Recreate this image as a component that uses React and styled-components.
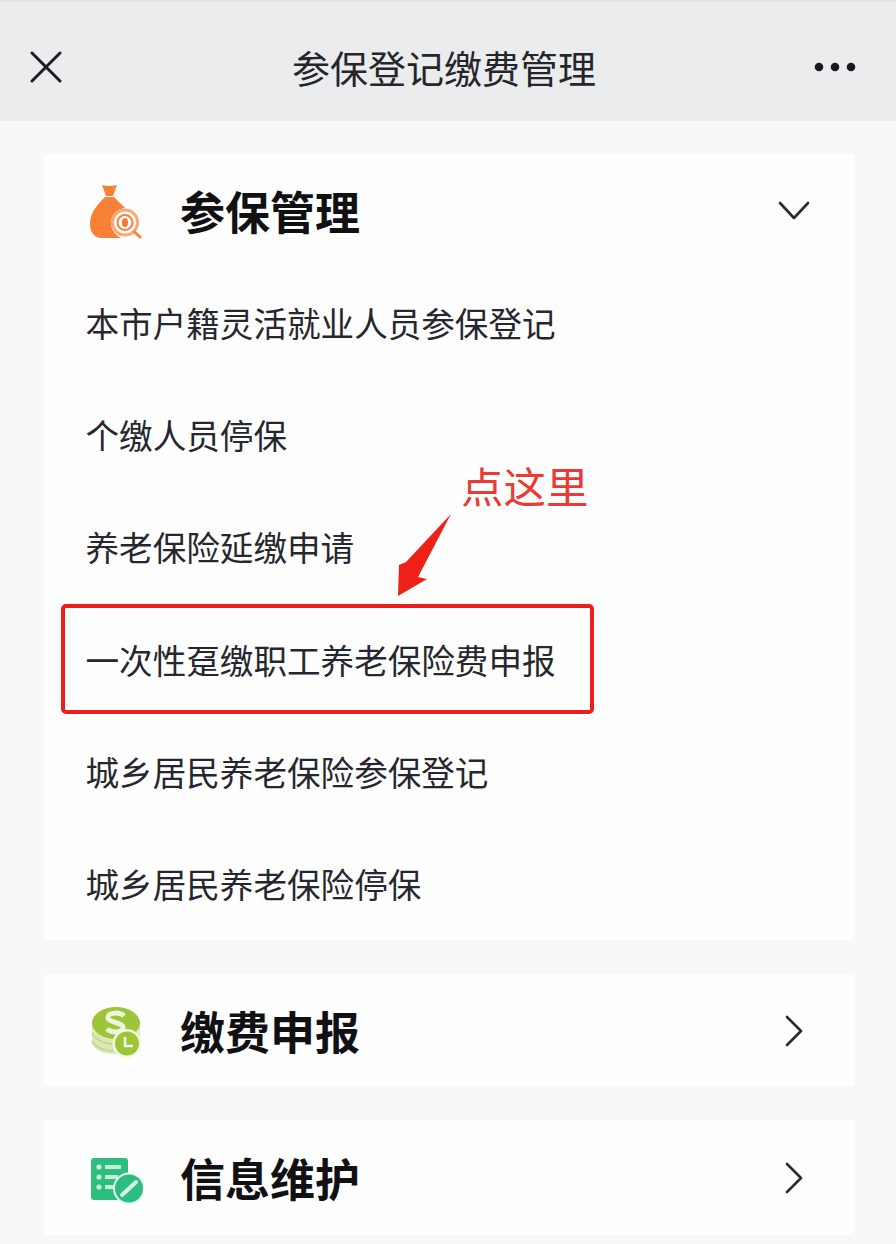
import React from "react";
import styled, { createGlobalStyle } from "styled-components";

const Global = createGlobalStyle`
  html, body { margin: 0; padding: 0; background: #f7f8fa; }
  body { font-family: "Noto Sans CJK SC", "Liberation Sans", sans-serif; }
  * { box-sizing: border-box; }
`;
const Page = styled.div`
  position: relative;
  width: 896px;
  height: 1244px;
  overflow: hidden;
  background: #f7f8fa;
`;
const Header = styled.header`
  height: 121px;
  background: #ebecee;
  border-top: 2px solid #e2e3e5;
  display: grid;
  grid-template-columns: 1fr auto 1fr;
  align-items: center;
  padding: 11px 38px 0 30px;
`;
const HeaderLeft = styled.span`
  display: flex;
  justify-content: flex-start;
`;
const HeaderRight = styled.span`
  display: flex;
  justify-content: flex-end;
`;
const HeaderTitle = styled.h1`
  margin: 0;
  font-size: 38px;
  font-weight: 400;
  line-height: 52px;
  color: #26262a;
`;
const Main = styled.main`
  display: flex;
  flex-direction: column;
  padding: 33px 42px 0 44px;
`;
const Card = styled.section`
  background: #fefefe;
  margin-bottom: ${(p) => p.$gap}px;
`;
const CardHead = styled.div`
  height: ${(p) => p.$height}px;
  display: flex;
  align-items: center;
  padding: ${(p) => p.$pad};
`;
const IconSlot = styled.span`
  width: 60px;
  height: 60px;
  flex: none;
  margin-right: 32px;
  display: flex;
  align-items: center;
  justify-content: flex-start;
`;
const CardTitle = styled.h2`
  flex: 1;
  margin: 0;
  font-size: 45px;
  font-weight: 700;
  line-height: 60px;
  color: #111114;
`;
const List = styled.ul`
  list-style: none;
  margin: 0;
  padding: 0 0 0 41.5px;
`;
const Row = styled.li`
  height: 112.2px;
  display: flex;
  align-items: center;
  font-size: 33.6px;
  line-height: 44px;
  color: #26262e;
`;
const Marker = styled.div`
  position: absolute;
  left: 61px;
  top: 604px;
  width: 533px;
  height: 110px;
  border: 4px solid #ee1c1c;
  border-radius: 5px;
`;
const Hint = styled.div`
  position: absolute;
  left: 461px;
  top: 456px;
  font-size: 42.5px;
  line-height: 58px;
  font-weight: 400;
  color: #ea3a34;
`;
const ArrowMark = styled.svg`
  position: absolute;
  left: 390px;
  top: 508px;
`;

const Close = () => (
  <svg width="32" height="32" viewBox="0 0 32 32" fill="none" stroke="#1d1d22" strokeWidth="3" strokeLinecap="round">
    <path d="M2 2 L30 30 M30 2 L2 30" />
  </svg>
);
const Dots = () => (
  <svg width="44" height="12" viewBox="0 0 44 12" fill="#1a1822">
    <circle cx="5" cy="6" r="4.3" />
    <circle cx="21" cy="6" r="4.3" />
    <circle cx="37" cy="6" r="4.3" />
  </svg>
);
const ChevronDown = () => (
  <svg width="32" height="20" viewBox="0 0 32 20" fill="none" stroke="#2a2a33" strokeWidth="2.6" strokeLinecap="round" strokeLinejoin="round">
    <path d="M2 2 L16 17 L30 2" />
  </svg>
);
const ChevronRight = () => (
  <svg width="20" height="32" viewBox="0 0 20 32" fill="none" stroke="#2a2a33" strokeWidth="2.6" strokeLinecap="round" strokeLinejoin="round">
    <path d="M3 2 L17 16 L3 30" />
  </svg>
);
const BagIcon = () => (
  <svg width="56" height="56" viewBox="0 0 56 56">
    <path d="M14 2 Q21 4 29 2 L25 13 H18 Z" fill="#f98034" />
    <path d="M17 14 H26 C29 18 34 21 37 25 C28 26 22 33 23 42 C24 48 28 52 33 55 H14 C6 55 2 49 2 41 C2 29 10 21 17 14 Z" fill="#f98034" />
    <circle cx="37" cy="39.5" r="12.5" fill="#fff" stroke="#f9a778" strokeWidth="3" />
    <circle cx="37" cy="39.5" r="7.5" fill="#fff" stroke="#f98034" strokeWidth="2" />
    <ellipse cx="37" cy="39.5" rx="3" ry="4.6" fill="#f4773a" />
    <path d="M46.5 49 L52 54" stroke="#f98034" strokeWidth="3" strokeLinecap="round" />
  </svg>
);
const CoinIcon = () => (
  <svg width="56" height="56" viewBox="0 0 56 56">
    <path d="M4 20 V38 C4 46 14 51 26 51 C38 51 52 46 52 38 V20 Z" fill="#dde9b8" />
    <path d="M4 30 C8 38 18 41 27 41 M4 38 C8 45 18 48 25 48" fill="none" stroke="#c2d98a" strokeWidth="2" />
    <ellipse cx="28" cy="20" rx="24" ry="16" fill="#9cc53a" />
    <path d="M36 13 C32 9 21 9 20 14 C19 20 36 19 35 25 C34 30 23 30 19 26" fill="none" stroke="#eef5d8" strokeWidth="5" />
    <circle cx="39" cy="40.5" r="14.5" fill="#f2f8e2" />
    <circle cx="39" cy="40.5" r="12" fill="#9cc53a" />
    <path d="M37 34 V43 H45" fill="none" stroke="#f4f9e6" strokeWidth="2.6" />
  </svg>
);
const FormIcon = () => (
  <svg width="56" height="56" viewBox="0 0 56 56">
    <rect x="3" y="8" width="37" height="42" rx="3" fill="#2dbd7f" />
    <circle cx="11" cy="17" r="2.6" fill="#c5efd9" />
    <circle cx="11" cy="27" r="2.6" fill="#c5efd9" />
    <circle cx="11" cy="37" r="2.6" fill="#c5efd9" />
    <path d="M17 17 H33 M17 27 H30 M17 37 H26" stroke="#c5efd9" strokeWidth="4" />
    <circle cx="41" cy="38.5" r="16" fill="#e6f8ef" />
    <circle cx="41" cy="38.5" r="14" fill="#2dbd7f" />
    <path d="M34 45 L48 32" stroke="#d8f5e6" strokeWidth="4" strokeLinecap="round" />
  </svg>
);

const rows = [
  "本市户籍灵活就业人员参保登记",
  "个缴人员停保",
  "养老保险延缴申请",
  "一次性趸缴职工养老保险费申报",
  "城乡居民养老保险参保登记",
  "城乡居民养老保险停保",
];

export default function App() {
  return (
    <Page>
      <Global />
      <Header>
        <HeaderLeft><Close /></HeaderLeft>
        <HeaderTitle>参保登记缴费管理</HeaderTitle>
        <HeaderRight><Dots /></HeaderRight>
      </Header>
      <Main>
        <Card $gap={35}>
          <CardHead $height={113} $pad="0 44px 0 44px">
            <IconSlot><BagIcon /></IconSlot>
            <CardTitle>参保管理</CardTitle>
            <ChevronDown />
          </CardHead>
          <List>
            {rows.map((r) => (
              <Row key={r}>{r}</Row>
            ))}
          </List>
        </Card>
        <Card $gap={34}>
          <CardHead $height={111} $pad="0 50px 0 44px">
            <IconSlot><CoinIcon /></IconSlot>
            <CardTitle>缴费申报</CardTitle>
            <ChevronRight />
          </CardHead>
        </Card>
        <Card $gap={0}>
          <CardHead $height={115} $pad="0 50px 0 44px">
            <IconSlot><FormIcon /></IconSlot>
            <CardTitle>信息维护</CardTitle>
            <ChevronRight />
          </CardHead>
        </Card>
      </Main>
      <Hint>点这里</Hint>
      <ArrowMark width="70" height="95" viewBox="0 0 70 95">
        <path d="M61 6 L28 69 L37 71 L8 88 L9 57 L16 54 Z" fill="#ee2018" />
      </ArrowMark>
      <Marker />
    </Page>
  );
}
